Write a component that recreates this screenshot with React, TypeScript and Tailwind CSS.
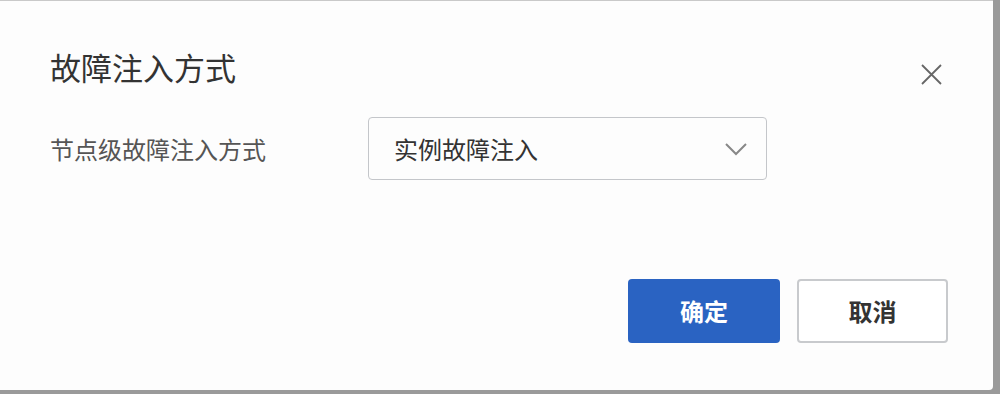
import React from 'react';

const font = { fontFamily: '"Noto Sans CJK SC", "Noto Sans", sans-serif' };

export default function App() {
  return (
    <div className="w-[1000px] h-[394px] bg-[#9a9a9a] overflow-hidden" style={font}>
      <div className="w-[993px] h-[390px] bg-[#fdfdfd] border-t border-[#c9c9c9] rounded-br-[4px] flex flex-col">
        <div className="flex items-center justify-between pl-[50px] pr-[51px] pt-[46px]">
          <h1 className="text-[31px] leading-[40px] text-[#333]">故障注入方式</h1>
          <button className="w-[21px] h-[21px] mt-[14px] flex items-center justify-center text-[#666]">
            <svg width="21" height="21" viewBox="0 0 21 21" fill="none" stroke="currentColor" strokeWidth="1.8">
              <path d="M1 1L20 20M20 1L1 20" />
            </svg>
          </button>
        </div>
        <div className="flex items-center pl-[50px] mt-[30px]">
          <span className="w-[318px] text-[24px] text-[#555]">节点级故障注入方式</span>
          <div className="w-[399px] h-[63px] border border-[#c4c6ca] rounded-[4px] flex items-center justify-between pl-[25px] pr-[18px]">
            <span className="text-[24px] text-[#333]">实例故障注入</span>
            <svg width="24" height="14" viewBox="0 0 24 14" fill="none" stroke="#888" strokeWidth="2">
              <path d="M2 2L12 12L22 2" />
            </svg>
          </div>
        </div>
        <div className="flex justify-end gap-[17px] pr-[45px] mt-auto mb-[47px]">
          <button className="w-[152px] h-[64px] rounded-[4px] bg-[#2a63c2] text-white text-[24px] font-bold">确定</button>
          <button className="w-[151px] h-[64px] rounded-[4px] border-2 border-[#c8cacd] bg-white text-[#333] text-[24px] font-bold">取消</button>
        </div>
      </div>
    </div>
  );
}
